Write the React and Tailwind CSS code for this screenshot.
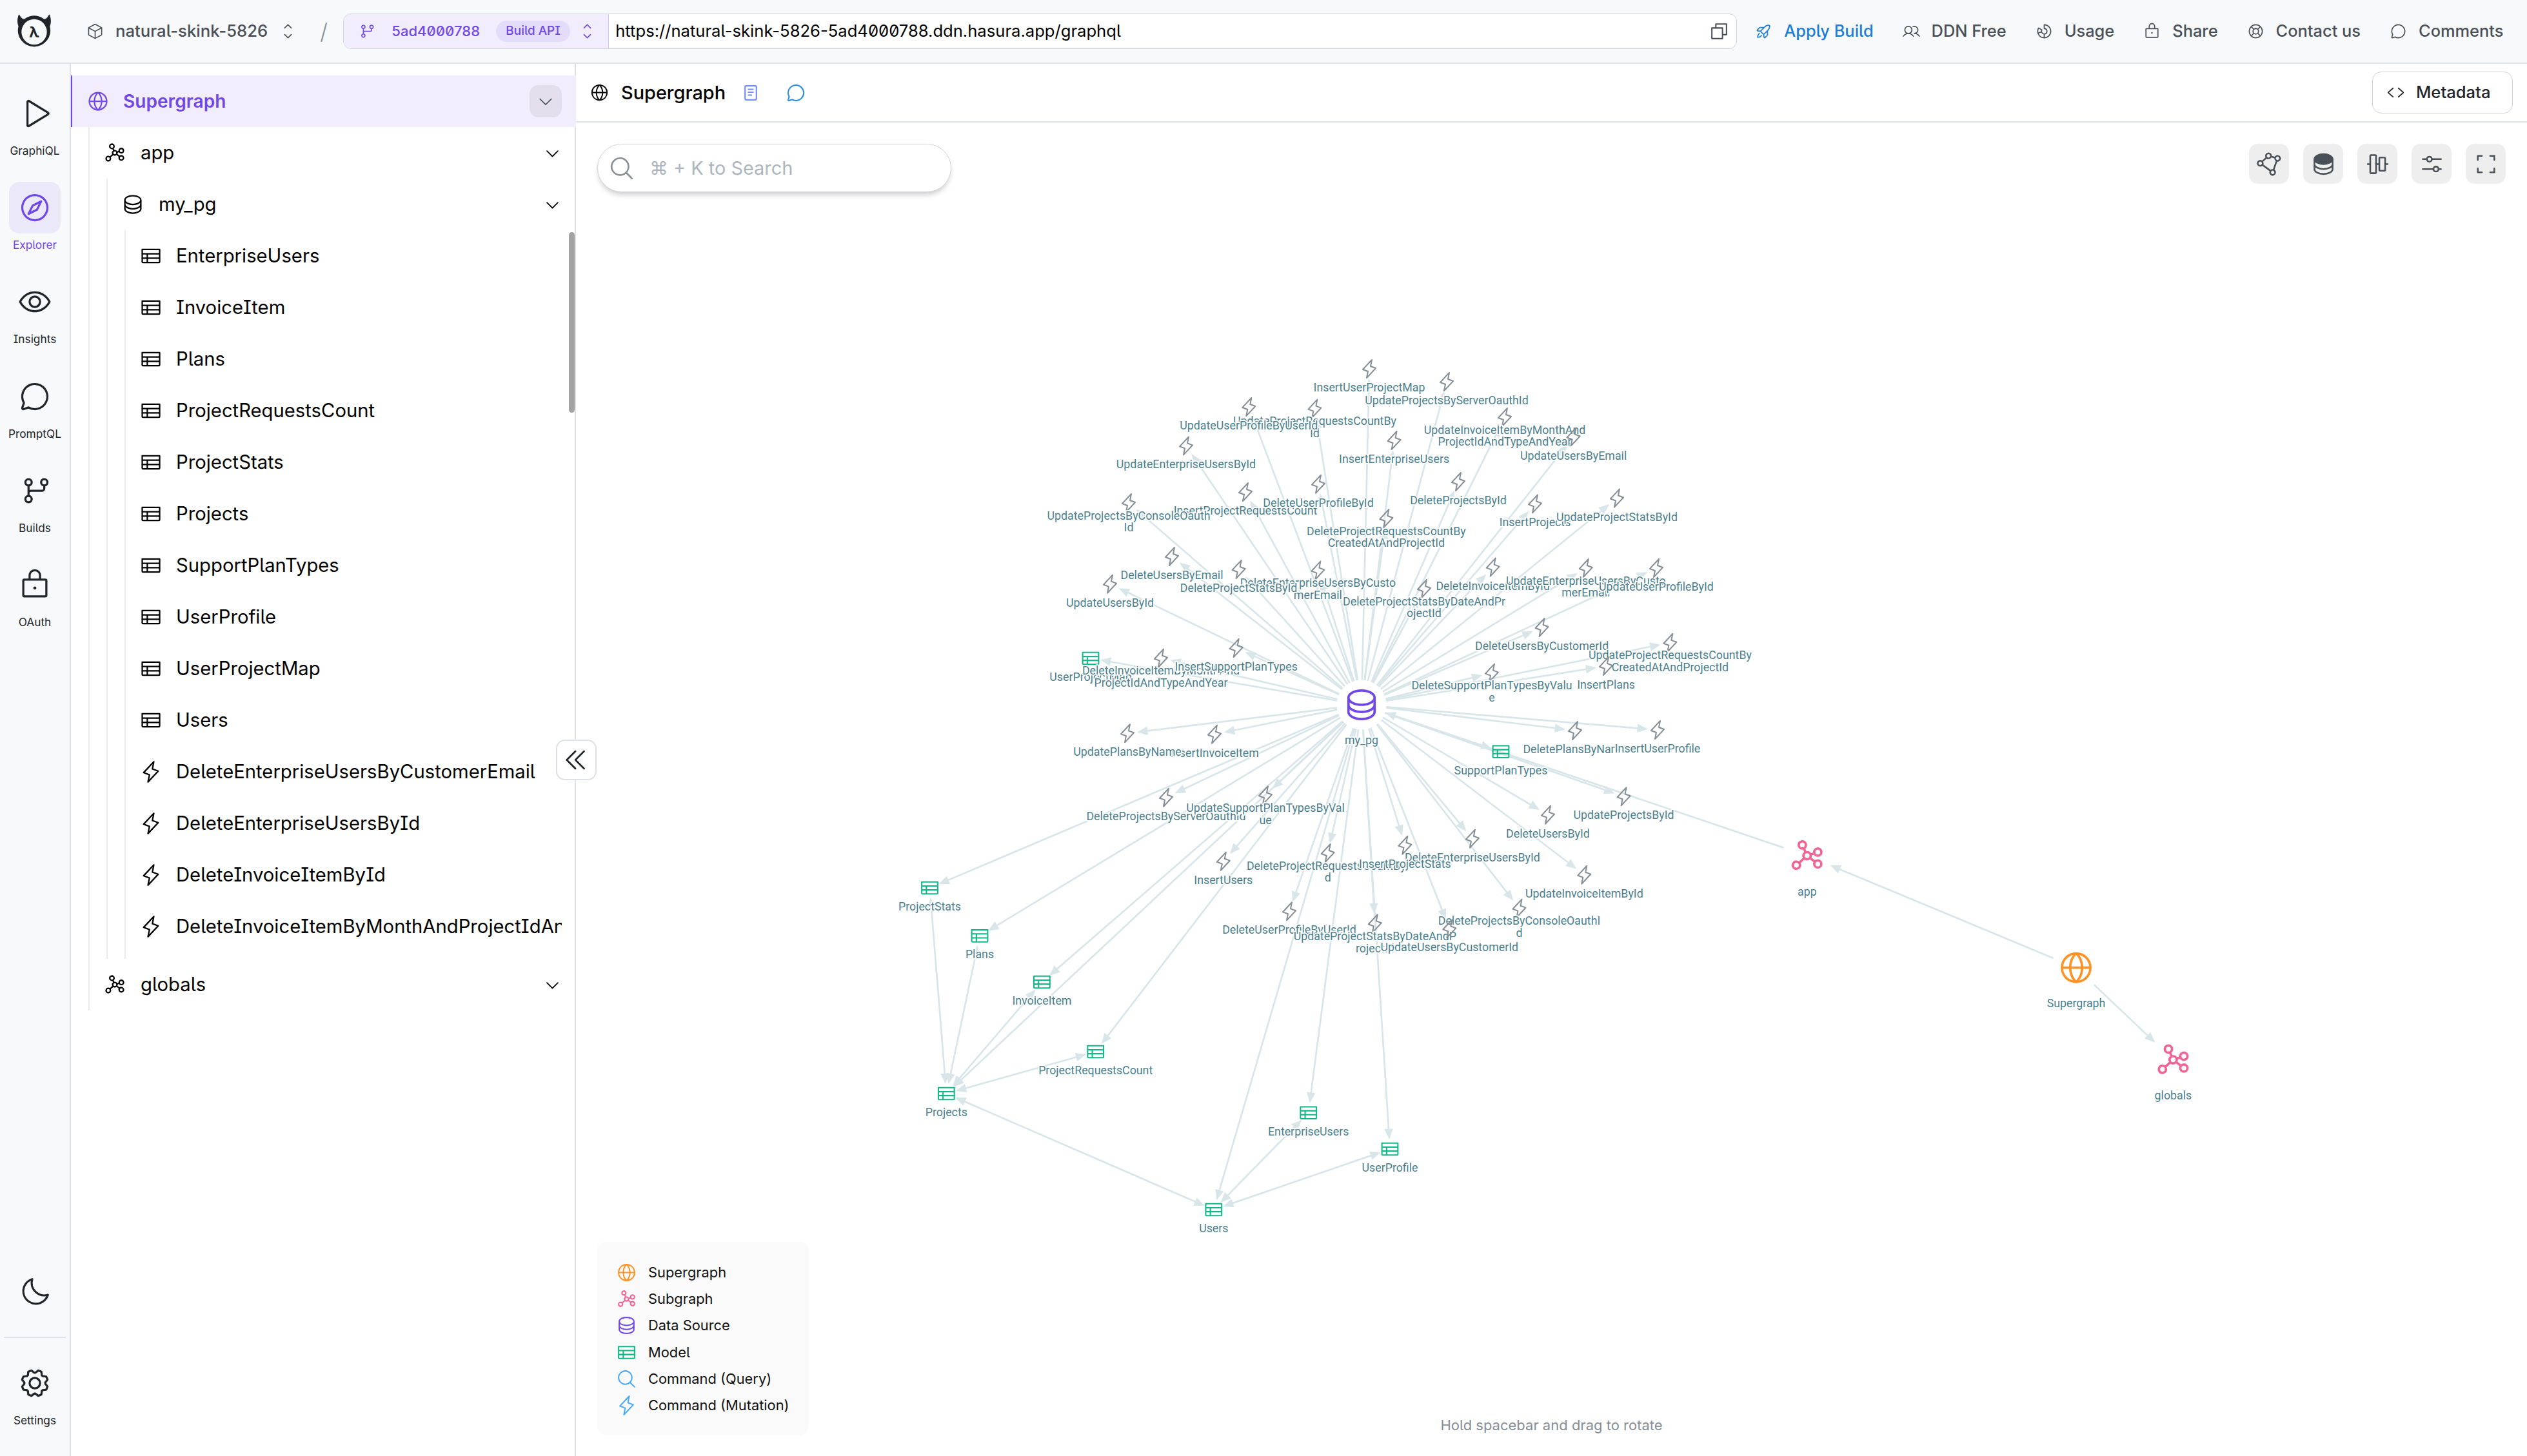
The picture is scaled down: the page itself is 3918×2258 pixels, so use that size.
import React from "react";
import {
  PiCube, PiCaretUpDown, PiGitBranch, PiCopy, PiRocketLaunch, PiUsers, PiChartDonut, PiLock, PiLifebuoy,
  PiChatCircle, PiPlay, PiCompass, PiEye, PiMoon, PiGear, PiGlobeSimple, PiCaretDown, PiGraph, PiDatabase,
  PiTable, PiLightning, PiCaretDoubleLeft, PiCodeSimple, PiMagnifyingGlass, PiPolygon, PiAlignCenterVertical,
  PiSlidersHorizontal, PiCornersOut,
} from "react-icons/pi";

/* ---------- graph data ---------- */

const HUB = { x: 2111, y: 1093 };

// [x, y, kind, label lines]; painted in order, so later labels cover earlier ones
const NODES = [
  [2123, 572, "cmd", ["InsertUserProjectMap"]],
  [2038.4, 633.6, "cmd", ["UpdateProjectRequestsCountBy", "Id"]],
  [1936.3, 631, "cmd", ["UpdateUserProfileByUserId"]],
  [1839, 691.4, "cmd", ["UpdateEnterpriseUsersById"]],
  [2161.6, 683, "cmd", ["InsertEnterpriseUsers"]],
  [1931, 763, "cmd", ["InsertProjectRequestsCount"]],
  [1750, 780, "cmd", ["UpdateProjectsByConsoleOauth", "Id"]],
  [2044, 750.7, "cmd", ["DeleteUserProfileById"]],
  [2149.4, 804, "cmd", ["DeleteProjectRequestsCountBy", "CreatedAtAndProjectId"]],
  [1817, 863, "cmd", ["DeleteUsersByEmail"]],
  [2043.4, 884.6, "cmd", ["DeleteEnterpriseUsersByCusto", "merEmail"]],
  [1920.6, 883, "cmd", ["DeleteProjectStatsById"]],
  [1721, 905.7, "cmd", ["UpdateUsersById"]],
  [1691, 1021, "model", ["UserProjectMap"]],
  [1800, 1020.7, "cmd", ["DeleteInvoiceItemByMonthAnd", "ProjectIdAndTypeAndYear"]],
  [1916.7, 1005, "cmd", ["InsertSupportPlanTypes"]],
  [2243, 592, "cmd", ["UpdateProjectsByServerOauthId"]],
  [2333, 647, "cmd", ["UpdateInvoiceItemByMonthAnd", "ProjectIdAndTypeAndYear"]],
  [2439.6, 677.5, "cmd", ["UpdateUsersByEmail"]],
  [2261, 747, "cmd", ["DeleteProjectsById"]],
  [2380, 781.4, "cmd", ["InsertProjects"]],
  [2507, 772.5, "cmd", ["UpdateProjectStatsById"]],
  [2314.7, 879.6, "cmd", ["DeleteInvoiceItemById"]],
  [2458.8, 881, "cmd", ["UpdateEnterpriseUsersByCusto", "merEmail"]],
  [2568, 881, "cmd", ["UpdateUserProfileById"]],
  [2208, 913, "cmd", ["DeleteProjectStatsByDateAndPr", "ojectId"]],
  [2390.6, 973, "cmd", ["DeleteUsersByCustomerId"]],
  [2589.4, 996.8, "cmd", ["UpdateProjectRequestsCountBy", "CreatedAtAndProjectId"]],
  [2490, 1033, "cmd", ["InsertPlans"]],
  [2313, 1043.6, "cmd", ["DeleteSupportPlanTypesByValu", "e"]],
  [1883, 1138.7, "cmd", ["InsertInvoiceItem"]],
  [1748, 1137.3, "cmd", ["UpdatePlansByName"]],
  [1808, 1236.7, "cmd", ["DeleteProjectsByServerOauthId"]],
  [1962, 1233.3, "cmd", ["UpdateSupportPlanTypesByVal", "ue"]],
  [1896.8, 1335.7, "cmd", ["InsertUsers"]],
  [2058.7, 1323, "cmd", ["DeleteProjectRequestsCountByI", "d"]],
  [1999, 1413.3, "cmd", ["DeleteUserProfileByUserId"]],
  [2131.8, 1432.3, "cmd", ["UpdateProjectStatsByDateAndP", "rojectId"]],
  [2442, 1133, "cmd", ["DeletePlansByName"]],
  [2570, 1132, "cmd", ["InsertUserProfile"]],
  [2327, 1165.7, "model", ["SupportPlanTypes"]],
  [2517.6, 1235.3, "cmd", ["UpdateProjectsById"]],
  [2400, 1263.7, "cmd", ["DeleteUsersById"]],
  [2282.9, 1300.7, "cmd", ["DeleteEnterpriseUsersById"]],
  [2178.4, 1310.7, "cmd", ["InsertProjectStats"]],
  [2456.3, 1356.7, "cmd", ["UpdateInvoiceItemById"]],
  [2355.5, 1408.7, "cmd", ["DeleteProjectsByConsoleOauthI", "d"]],
  [2247.3, 1440.3, "cmd", ["UpdateUsersByCustomerId"]],
  [1441.5, 1377, "model", ["ProjectStats"]],
  [1519, 1451.4, "model", ["Plans"]],
  [1615.4, 1523, "model", ["InvoiceItem"]],
  [1698.7, 1631, "model", ["ProjectRequestsCount"]],
  [1467.3, 1696, "model", ["Projects"]],
  [2028.7, 1725.7, "model", ["EnterpriseUsers"]],
  [2155, 1782, "model", ["UserProfile"]],
  [1881.8, 1876, "model", ["Users"]],
  [2111, 1093, "source", ["my_pg"]],
  [2801.8, 1327, "subgraph", ["app"]],
  [3219, 1500.7, "supergraph", ["Supergraph"]],
  [3369.4, 1643.5, "subgraph", ["globals"]],
];

const KINDS = {
  cmd: { Icon: PiLightning, color: "#868e96", size: 32, drop: 29, gap: 15 },
  model: { Icon: PiTable, color: "#12b886", size: 33, drop: 29, gap: 15 },
  source: { Icon: PiDatabase, color: "#7048e8", size: 59, drop: 55, gap: 38.5 },
  subgraph: { Icon: PiGraph, color: "#f06595", size: 59, drop: 55.5, gap: 38.5 },
  supergraph: { Icon: PiGlobeSimple, color: "#fd9226", size: 59, drop: 55, gap: 38.5 },
};

const byLabel = (name) => NODES.find((n) => n[3][0] === name);

// [from, to, arrow at both ends]
const EDGES = [
  ...NODES.filter((n) => n[2] === "cmd" || n[2] === "model").map((n) => [byLabel("my_pg"), n, false]),
  [byLabel("app"), byLabel("my_pg"), false],
  [byLabel("Supergraph"), byLabel("app"), false],
  [byLabel("Supergraph"), byLabel("globals"), false],
  ...["ProjectStats", "Plans", "InvoiceItem", "ProjectRequestsCount", "Users"].map((n) => [byLabel(n), byLabel("Projects"), true]),
  ...["EnterpriseUsers", "UserProfile"].map((n) => [byLabel(n), byLabel("Users"), true]),
];

function Arrow({ x, y, ux, uy }) {
  const bx = x - ux * 16.5;
  const by = y - uy * 16.5;
  const px = -uy * 6.8;
  const py = ux * 6.8;
  return <path d={`M${x} ${y}L${bx + px} ${by + py}L${bx - px} ${by - py}Z`} fill="#d9e6e9" />;
}

function Edge({ from, to, both }) {
  const dx = to[0] - from[0];
  const dy = to[1] - from[1];
  const len = Math.hypot(dx, dy);
  const ux = dx / len;
  const uy = dy / len;
  const g1 = KINDS[from[2]].gap;
  const g2 = KINDS[to[2]].gap;
  const x1 = from[0] + ux * g1;
  const y1 = from[1] + uy * g1;
  const x2 = to[0] - ux * g2;
  const y2 = to[1] - uy * g2;
  const s = both ? 10 : 0;
  return (
    <g>
      <line x1={x1 + ux * s} y1={y1 + uy * s} x2={x2 - ux * 10} y2={y2 - uy * 10} stroke="#d9e6e9" strokeWidth="2.7" />
      <Arrow x={x2} y={y2} ux={ux} uy={uy} />
      {both && <Arrow x={x1} y={y1} ux={-ux} uy={-uy} />}
    </g>
  );
}

function Node({ node }) {
  const [x, y, kind, lines] = node;
  const { Icon, color, size, drop } = KINDS[kind];
  const first = y + drop - ((lines.length - 1) * 18.7) / 2 + 6;
  return (
    <g>
      <Icon x={x - size / 2} y={y - size / 2} size={size} color={color} />
      {lines.map((t, i) => (
        <text
          key={i}
          x={x}
          y={first + i * 18.7}
          textAnchor="middle"
          className="fill-[#4b7f8d] stroke-white stroke-[3.4px] font-[Roboto,sans-serif] text-[17.8px] [paint-order:stroke] [stroke-linejoin:round]"
        >
          {t}
        </text>
      ))}
    </g>
  );
}

function Graph() {
  return (
    <svg viewBox="893 190 3025 2068" className="absolute inset-0 h-full w-full">
      {EDGES.map(([a, b, both], i) => (
        <Edge key={i} from={a} to={b} both={both} />
      ))}
      <circle cx={HUB.x} cy={HUB.y} r="36" fill="#fff" />
      {NODES.map((n, i) => (
        <Node key={i} node={n} />
      ))}
    </svg>
  );
}

/* ---------- small drawings ---------- */

function Logo() {
  return (
    <svg width="54" height="54" viewBox="0 0 54 54" className="text-[#212529]">
      <path
        fill="currentColor"
        fillRule="evenodd"
        d="M3.6.6c-1 .2-2.6 5.8-2.5 10.8.1 3 .9 5.4 1.5 7.300A25.200 25.200 0 1 0 51.300 18.700c.7-1.900 1.500-4.300 1.600-7.300C53 6.400 51.400.8 50.400.6c-.8-.1-2.500 5.700-6.400 6.800-1.500.4-2.700-.6-4.500-1.700C36 3.600 31.700 2.200 27 2.200s-9 1.400-12.500 3.500C12.700 6.800 11.500 7.800 10 7.400 6.100 6.300 4.400.5 3.600.6ZM27 7.800a19.700 19.700 0 1 1 0 39.400 19.700 19.700 0 0 1 0-39.400Z"
      />
      <text x="27" y="35.500" textAnchor="middle" fill="currentColor" className="font-[Inter,sans-serif] text-[23px] font-bold">λ</text>
    </svg>
  );
}

function DocIcon() {
  return (
    <svg width="20" height="24" viewBox="0 0 20 24" fill="none" stroke="#748ffc" strokeWidth="2.2">
      <rect x="1.200" y="1.200" width="17.600" height="21.600" rx="2" />
      <path d="M5.500 6.500h9M5.500 11h9M5.500 15.500h6.500" />
    </svg>
  );
}

function DatabaseTopFilled() {
  return (
    <svg width="41" height="41" viewBox="0 0 256 256" fill="none" stroke="currentColor" strokeWidth="16">
      <ellipse cx="128" cy="80" rx="88" ry="48" fill="currentColor" />
      <path d="M40 80v48c0 26.500 39.400 48 88 48s88-21.500 88-48V80M40 128v48c0 26.500 39.400 48 88 48s88-21.500 88-48v-48" />
    </svg>
  );
}

/* ---------- header ---------- */

const NAV = [
  [PiUsers, "DDN Free"],
  [PiChartDonut, "Usage"],
  [PiLock, "Share"],
  [PiLifebuoy, "Contact us"],
  [PiChatCircle, "Comments"],
];

function Header() {
  return (
    <header className="flex h-[99px] shrink-0 items-center border-b-2 border-[#dee2e6] bg-[#f8f9fb] text-[25.4px] font-medium whitespace-nowrap text-[#495057]">
      <div className="flex w-[106px] shrink-0 justify-center">
        <Logo />
      </div>
      <div className="ml-[28px] flex shrink-0 items-center gap-[18px]">
        <PiCube size={27} />
        <span className="text-[25.7px]">natural-skink-5826</span>
        <PiCaretUpDown size={27} />
      </div>
      <span className="ml-[30px] w-[24px] shrink-0 text-center text-[34px] font-light text-[#868e96]">/</span>
      <div className="ml-[18px] flex h-[55px] w-[2161px] shrink-0 overflow-hidden rounded-[12px] border border-[#ced4da] bg-white">
        <div className="flex w-[411px] shrink-0 items-center border-r border-[#cfc8e8] bg-[#f1edfd] pl-[22px] text-[#7048e8]">
          <PiGitBranch size={27} />
          <span className="ml-[25px] text-[22.1px]">5ad4000788</span>
          <span className="ml-[25px] flex h-[33px] w-[115px] items-center justify-center rounded-full bg-[#e3dcfb] text-[18.900px]">Build API</span>
          <PiCaretUpDown size={27} className="ml-[13px]" />
        </div>
        <div className="flex flex-1 items-center justify-between pr-[10px] pl-[10px] text-black">
          <span className="text-[25.600px] font-normal">https://natural-skink-5826-5ad4000788.ddn.hasura.app/graphql</span>
          <PiCopy size={33} className="text-[#495057]" />
        </div>
      </div>
      <nav className="ml-[28px] flex items-center gap-[45px]">
        <span className="flex items-center gap-[18px] text-[#1c7ed6]">
          <PiRocketLaunch size={27} />
          Apply Build
        </span>
        {NAV.map(([Icon, label]) => (
          <span key={label} className="flex items-center gap-[18px]">
            <Icon size={27} />
            {label}
          </span>
        ))}
      </nav>
    </header>
  );
}

/* ---------- left rail ---------- */

const RAIL = [
  [PiPlay, "GraphiQL"],
  [PiCompass, "Explorer"],
  [PiEye, "Insights"],
  [PiChatCircle, "PromptQL"],
  [PiGitBranch, "Builds"],
  [PiLock, "OAuth"],
];

function RailItem({ Icon, label, active }) {
  return (
    <div className={active ? "flex h-[146.200px] flex-col items-center text-[#7048e8]" : "flex h-[146.200px] flex-col items-center text-[#212529]"}>
      <div className={active ? "flex size-[80px] items-center justify-center rounded-[16px] bg-[#ebe8f9]" : "flex size-[80px] items-center justify-center"}>
        <Icon size={52} />
      </div>
      <span className="mt-[7px] text-[17.300px] leading-[22px]">{label}</span>
    </div>
  );
}

function Rail() {
  return (
    <aside className="flex w-[110px] shrink-0 flex-col border-r-2 border-[#dee2e6] bg-[#f8f9fb] pt-[37px]">
      {RAIL.map(([Icon, label]) => (
        <RailItem key={label} Icon={Icon} label={label} active={label === "Explorer"} />
      ))}
      <div className="mt-auto flex justify-center pb-[43px] text-[#212529]">
        <PiMoon size={52} />
      </div>
      <div className="mx-[6px] border-t-2 border-[#dee2e6]" />
      <div className="h-[183px] pt-[30px]">
        <RailItem Icon={PiGear} label="Settings" />
      </div>
    </aside>
  );
}

/* ---------- tree ---------- */

const TABLES = ["EnterpriseUsers", "InvoiceItem", "Plans", "ProjectRequestsCount", "ProjectStats", "Projects", "SupportPlanTypes", "UserProfile", "UserProjectMap", "Users"];
const COMMANDS = ["DeleteEnterpriseUsersByCustomerEmail", "DeleteEnterpriseUsersById", "DeleteInvoiceItemById", "DeleteInvoiceItemByMonthAndProjectIdAndTypeAndYear"];

function TreeRow({ Icon, label, branch }) {
  return (
    <div className="flex h-[80px] items-center pl-[21px]">
      <Icon size={36} className="shrink-0" />
      <span className={branch ? "ml-[22px] flex-1" : "mr-[20px] ml-[21px] flex-1 overflow-hidden"}>{label}</span>
      {branch && <PiCaretDown size={27} className="mr-[21px]" />}
    </div>
  );
}

function Tree() {
  return (
    <section className="relative w-[783px] shrink-0 border-r-2 border-[#dee2e6] bg-white pt-[18px] text-[29.250px] whitespace-nowrap text-black">
      <div className="-mr-[2px] flex h-[80px] items-center border-l-2 border-[#7048e8] bg-[#f1edfd] pl-[22px] text-[28.100px] font-semibold text-[#7048e8]">
        <PiGlobeSimple size={36} />
        <span className="ml-[21px] flex-1">Supergraph</span>
        <span className="mr-[22px] flex size-[50px] items-center justify-center rounded-[14px] bg-[#e2deec] text-[#495057]">
          <PiCaretDown size={28} />
        </span>
      </div>
      <div className="ml-[27px] border-l-2 border-[#e9ecef]">
        <TreeRow Icon={PiGraph} label="app" branch />
        <div className="ml-[26px] border-l-2 border-[#e9ecef]">
          <TreeRow Icon={PiDatabase} label="my_pg" branch />
          <div className="relative ml-[26px] h-[1130px] overflow-hidden border-l-2 border-[#e9ecef]">
            {TABLES.map((t) => (
              <TreeRow key={t} Icon={PiTable} label={t} />
            ))}
            {COMMANDS.map((t) => (
              <TreeRow key={t} Icon={PiLightning} label={t} />
            ))}
            <div className="absolute top-[3px] right-0 h-[280px] w-[9px] rounded-full bg-[#a3a3a3]" />
          </div>
        </div>
        <TreeRow Icon={PiGraph} label="globals" branch />
      </div>
      <div className="absolute top-[1048px] -right-[34px] z-10 flex size-[63px] items-center justify-center rounded-[14px] border-2 border-[#dee2e6] bg-white text-[#212529]">
        <PiCaretDoubleLeft size={43} />
      </div>
    </section>
  );
}

/* ---------- main panel ---------- */

const LEGEND = [
  [PiGlobeSimple, "Supergraph", "text-[#fd9226]"],
  [PiGraph, "Subgraph", "text-[#f06595]"],
  [PiDatabase, "Data Source", "text-[#7048e8]"],
  [PiTable, "Model", "text-[#12b886]"],
  [PiMagnifyingGlass, "Command (Query)", "text-[#4dabf7]"],
  [PiLightning, "Command (Mutation)", "text-[#4dabf7]"],
];

function ToolButton({ children }) {
  return <span className="flex size-[62px] items-center justify-center rounded-[14px] bg-[#eeeeee] text-[#495057]">{children}</span>;
}

function Main() {
  return (
    <main className="flex min-w-0 flex-1 flex-col">
      <div className="flex h-[91px] shrink-0 items-center border-b-2 border-[#dee2e6] pr-[22px] pl-[21px] text-black">
        <PiGlobeSimple size={31} />
        <span className="ml-[18px] text-[28.900px] font-medium">Supergraph</span>
        <span className="ml-[29px]">
          <DocIcon />
        </span>
        <PiChatCircle size={32} className="ml-[44px] text-[#228be6]" />
        <div className="ml-auto flex h-[65px] w-[218px] items-center rounded-[14px] border border-[#ced4da] pl-[22px] text-[25.600px] font-medium text-[#212529]">
          <PiCodeSimple size={27} />
          <span className="ml-[18px]">Metadata</span>
        </div>
      </div>
      <div className="relative flex-1">
        <Graph />
        <div className="absolute top-[33px] left-[33px] flex h-[75px] w-[549px] items-center rounded-full border border-[#ced4da] bg-white pl-[16px] text-[28.900px] text-[#adb5bd] shadow-[0_6px_8px_-2px_rgba(0,0,0,0.2)]">
          <PiMagnifyingGlass size={42} className="text-[#868e96]" />
          <span className="ml-[22px]">⌘ + K to Search</span>
        </div>
        <div className="absolute top-[33px] right-[33px] flex gap-[22px]">
          <ToolButton><PiPolygon size={41} /></ToolButton>
          <ToolButton><DatabaseTopFilled /></ToolButton>
          <ToolButton><PiAlignCenterVertical size={41} /></ToolButton>
          <ToolButton><PiSlidersHorizontal size={41} /></ToolButton>
          <ToolButton><PiCornersOut size={41} /></ToolButton>
        </div>
        <div className="absolute bottom-[33px] left-[33px] flex h-[299px] w-[328px] flex-col justify-center rounded-[14px] bg-[#fafafa] pt-[2px] pl-[29px] text-[21.850px] text-[#111]">
          {LEGEND.map(([Icon, label, color]) => (
            <div key={label} className="flex h-[41.300px] items-center gap-[17px]">
              <Icon size={33} className={color} />
              {label}
            </div>
          ))}
        </div>
        <div className="absolute inset-x-0 bottom-[34px] text-center text-[22px] leading-[28px] text-[#868e96]">Hold spacebar and drag to rotate</div>
      </div>
    </main>
  );
}

export default function App() {
  return (
    <div className="flex h-[2258px] w-[3918px] flex-col overflow-hidden bg-white font-[Inter,sans-serif] [font-feature-settings:'ss02']">
      <Header />
      <div className="flex min-h-0 flex-1">
        <Rail />
        <Tree />
        <Main />
      </div>
    </div>
  );
}
